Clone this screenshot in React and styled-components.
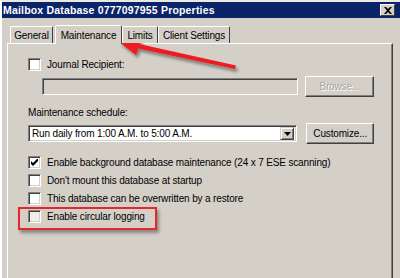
import React from 'react';
import styled, { createGlobalStyle } from 'styled-components';

const GlobalStyle = createGlobalStyle`
  html, body {
    margin: 0;
    padding: 0;
    background: #d4d0c8;
  }
  body {
    font-family: "Liberation Sans", Arial, sans-serif;
    font-size: 10px;
    letter-spacing: -0.15px;
    color: #000;
  }
`;

const Window = styled.div`
  position: relative;
  width: 400px;
  height: 278px;
  overflow: hidden;
  background: #d4d0c8;
  box-sizing: border-box;
  border-top: 2px solid #ece9e2;
  border-left: 2px solid #ffffff;
`;

const TitleBar = styled.div`
  display: flex;
  align-items: center;
  justify-content: space-between;
  height: 16px;
  background: #0a246a;
  padding: 0 5px 0 1px;
`;

const Title = styled.span`
  color: #fff;
  font-weight: bold;
  font-size: 10.5px;
  letter-spacing: 0.18px;
`;

const CloseButton = styled.div`
  width: 15px;
  height: 12px;
  box-sizing: border-box;
  background: #d4d0c8;
  border: 1px solid;
  border-color: #fff #404040 #404040 #fff;
  display: flex;
  align-items: center;
  justify-content: center;
`;

const Body = styled.div`
  padding: 6px 5px 0 5px;
`;

const TabStrip = styled.div`
  display: flex;
  align-items: flex-end;
  height: 19px;
  padding-left: 3px;
`;

const Tab = styled.div`
  width: ${p => p.$w}px;
  height: ${p => (p.$active ? 19 : 17)}px;
  box-sizing: border-box;
  padding-top: 1px;
  margin-left: ${p => (p.$active ? 2 : 0)}px;
  background: #d4d0c8;
  border: 1px solid;
  border-bottom: none;
  border-color: #fff #404040 #404040 #fff;
  border-radius: 2px 2px 0 0;
  display: flex;
  align-items: center;
  justify-content: center;
  position: relative;
  z-index: ${p => (p.$active ? 2 : 1)};
  margin-bottom: ${p => (p.$active ? '-1px' : '0')};
  line-height: 14px;
  white-space: nowrap;
`;

const Panel = styled.div`
  height: 260px;
  box-sizing: border-box;
  border: 1px solid;
  border-color: #fff #404040 #404040 #fff;
  box-shadow: inset -1px 0 0 #808080;
  padding: 11px 18px 0 20px;
  width: 386px;
`;

const Row = styled.div`
  display: flex;
  align-items: center;
  height: ${p => p.$h || 18}px;
  padding-left: ${p => p.$indent || 0}px;
  margin-top: ${p => p.$mt || 0}px;
  gap: ${p => p.$gap || 0}px;
`;

const Box = styled.div`
  width: 13px;
  height: 13px;
  box-sizing: border-box;
  background: ${p => (p.$faded ? '#eeedea' : '#fff')};
  border: 1px solid;
  border-color: #808080 #fff #fff #808080;
  box-shadow: inset 1px 1px 0 #404040, inset -1px -1px 0 #d4d0c8;
  display: flex;
  align-items: center;
  justify-content: center;
  flex: none;
`;

const Label = styled.span`
  margin-left: 6px;
  white-space: nowrap;
`;

const TextField = styled.div`
  width: 257px;
  height: 17px;
  box-sizing: border-box;
  background: #d4d0c8;
  border: 1px solid;
  border-color: #808080 #fff #fff #808080;
  box-shadow: inset 1px 1px 0 #404040, inset -1px -1px 0 #d4d0c8;
`;

const Button = styled.div`
  width: ${p => p.$w || 69}px;
  height: 21px;
  box-sizing: border-box;
  border: 1px solid;
  border-color: #fff #404040 #404040 #fff;
  box-shadow: inset -1px -1px 0 #808080;
  display: flex;
  align-items: center;
  justify-content: center;
  color: ${p => (p.$disabled ? '#a7a59f' : '#000')};
  text-shadow: ${p => (p.$disabled ? '1px 1px 0 #fff' : 'none')};
`;

const SectionLabel = styled.div`
  margin-top: 9px;
  height: 14px;
  line-height: 14px;
`;

const Select = styled.div`
  width: 271px;
  height: 17px;
  box-sizing: border-box;
  background: #fff;
  border: 1px solid;
  border-color: #808080 #fff #fff #808080;
  box-shadow: inset 1px 1px 0 #404040, inset -1px -1px 0 #d4d0c8;
  display: flex;
  align-items: center;
  padding: 0 2px 0 3px;
`;

const SelectText = styled.span`
  flex: 1;
  white-space: nowrap;
`;

const SelectArrow = styled.div`
  width: 14px;
  height: 13px;
  box-sizing: border-box;
  background: #d4d0c8;
  border: 1px solid;
  border-color: #d4d0c8 #404040 #404040 #d4d0c8;
  box-shadow: inset 1px 1px 0 #fff, inset -1px -1px 0 #808080;
  display: flex;
  align-items: center;
  justify-content: center;
`;

const Checks = styled.div`
  margin-top: 9px;
`;

const Highlight = styled.div`
  position: absolute;
  left: 16px;
  top: 205px;
  width: 139px;
  height: 23px;
  border: 2px solid #e8252a;
  box-sizing: border-box;
  box-shadow: 2px 3px 3px rgba(0, 0, 0, 0.35);
`;

const Arrow = styled.svg`
  position: absolute;
  left: 0;
  top: 0;
  pointer-events: none;
`;

const Check = () => (
  <svg width="7" height="7" viewBox="0 0 7 7">
    <path d="M0 2v3l2 2 5-5V-1L2 4z" fill="#000" />
  </svg>
);

const CheckRow = ({ checked, faded, children }) => (
  <Row>
    <Box $faded={faded}>{checked && <Check />}</Box>
    <Label>{children}</Label>
  </Row>
);

export default function App() {
  return (
    <>
      <GlobalStyle />
      <Window>
        <TitleBar>
          <Title>Mailbox Database 0777097955 Properties</Title>
          <CloseButton>
            <svg width="8" height="7" viewBox="0 0 8 7">
              <path d="M0 0h2l2 2 2-2h2L5 3.5 8 7H6L4 5 2 7H0l3-3.5z" fill="#000" />
            </svg>
          </CloseButton>
        </TitleBar>
        <Body>
          <TabStrip>
            <Tab $w={43}>General</Tab>
            <Tab $w={67} $active>Maintenance</Tab>
            <Tab $w={36}>Limits</Tab>
            <Tab $w={72}>Client Settings</Tab>
          </TabStrip>
          <Panel>
            <CheckRow>Journal Recipient:</CheckRow>
            <Row $h={21} $indent={14} $gap={7} $mt={3}>
              <TextField />
              <Button $disabled>Browse...</Button>
            </Row>
            <SectionLabel>Maintenance schedule:</SectionLabel>
            <Row $h={21} $gap={9} $mt={3}>
              <Select>
                <SelectText>Run daily from 1:00 A.M. to 5:00 A.M.</SelectText>
                <SelectArrow>
                  <svg width="7" height="4" viewBox="0 0 7 4">
                    <path d="M0 0h7L3.5 4z" fill="#000" />
                  </svg>
                </SelectArrow>
              </Select>
              <Button $w={68}>Customize...</Button>
            </Row>
            <Checks>
              <CheckRow checked>Enable background database maintenance (24 x 7 ESE scanning)</CheckRow>
              <CheckRow>Don't mount this database at startup</CheckRow>
              <CheckRow>This database can be overwritten by a restore</CheckRow>
              <CheckRow faded>Enable circular logging</CheckRow>
            </Checks>
          </Panel>
        </Body>
        <Highlight />
        <Arrow width="400" height="278" viewBox="0 0 400 278">
          <defs>
            <filter id="sh" x="-20%" y="-50%" width="140%" height="200%">
              <feDropShadow dx="2" dy="3" stdDeviation="1.5" floodColor="#000" floodOpacity="0.4" />
            </filter>
          </defs>
          <g filter="url(#sh)" fill="#ee1c24" stroke="none">
            <path d="M233 67 L136 46.5 L137.2 42 L234 63.5 Z" />
            <path d="M117 40 L140 35 L134 53 Z" />
          </g>
        </Arrow>
      </Window>
    </>
  );
}
